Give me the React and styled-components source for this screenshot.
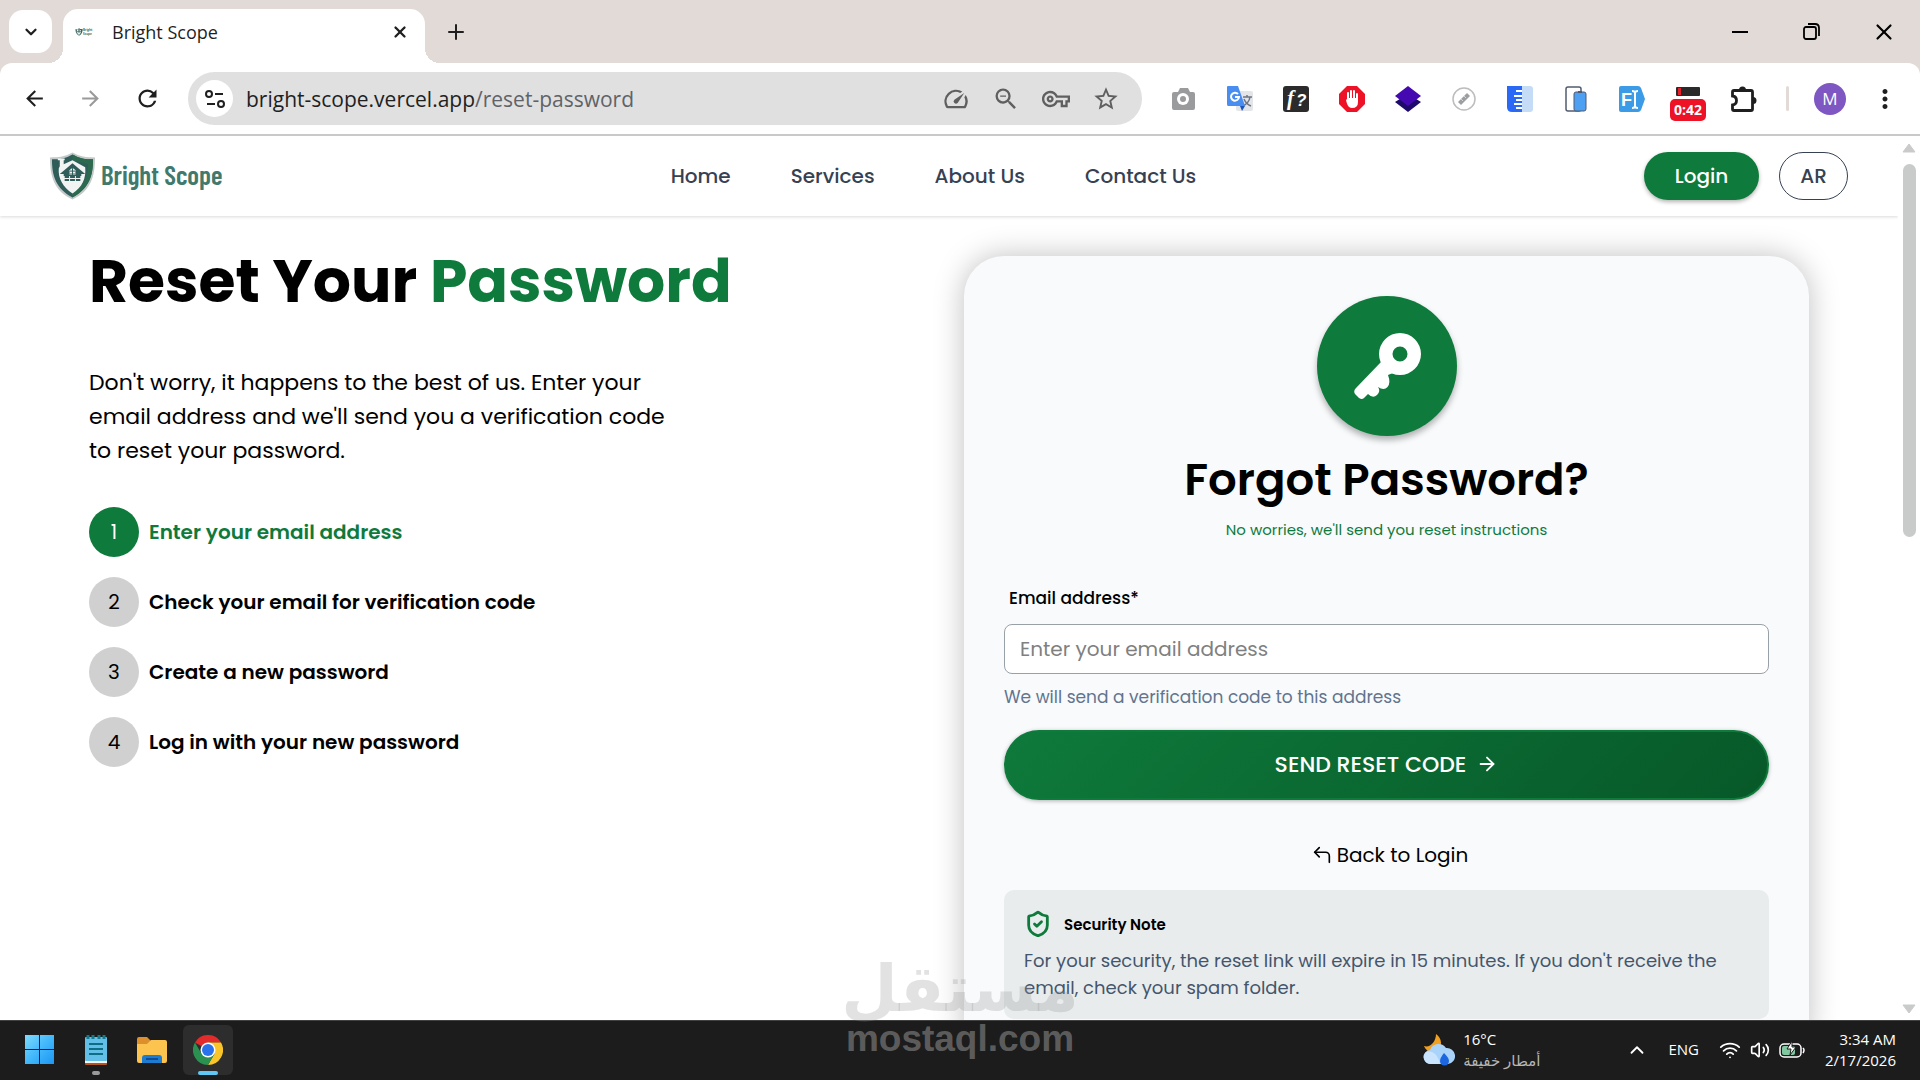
import { useState } from "react"
import styled, { createGlobalStyle, css } from "styled-components"
import {
  MdArrowBack,
  MdArrowForward,
  MdRefresh,
  MdZoomOut,
  MdOutlineVpnKey,
  MdStarBorder,
  MdMoreVert,
  MdOutlineSpeed,
} from "react-icons/md"
import { ArrowRight, ChevronDown, ChevronUp, CornerUpLeft, Plus, ShieldCheck, Volume2, Wifi, X } from "lucide-react"

const navLinks = ["Home", "Services", "About Us", "Contact Us"]

const steps = [
  "Enter your email address",
  "Check your email for verification code",
  "Create a new password",
  "Log in with your new password",
]

function Shield({ width, height }) {
  return (
    <svg width={width} height={height} viewBox="1 0 46 50" aria-hidden="true">
      <path d="M24 1C17 5 10 6 1 6c0 19 4 34 23 43C43 40 47 25 47 6 38 6 31 5 24 1z" fill="#c3c9c8" />
      <path d="M24 3C17 7 11 8 3 8c0 17 4 30 21 39C41 38 45 25 45 8 37 8 31 7 24 3z" fill="#2f5d5a" />
      <path d="M24 3c7 4 13 5 21 5 0 17-4 30-21 39v-5c12-7 16-17 16-29L24 9z" fill="#2b6a4f" />
      <path d="M24 9l13 7c1 12-3 20-13 27C14 36 9 27 10 17l1-2V9H9V7h7v2h-1v4z" fill="#f1f4f3" />
      <path d="M24 12L11 23h4v2h18v-2h4z" fill="#2f5d5a" />
      <path d="M21 24v-5q3-4 6 0v5z" fill="#f1f4f3" />
      <path d="M16 26h16M16 29h16" stroke="#2f5d5a" strokeWidth="2" />
      <path d="M21 20h6M21 23h6M24 17v8" stroke="#2f5d5a" />
      <path d="M21 25v6M27 25v6" stroke="#f1f4f3" />
    </svg>
  )
}

function KeyIcon() {
  return (
    <svg width="68" height="68" viewBox="0 0 68 68" fill="currentColor" aria-hidden="true">
      <path fillRule="evenodd" d="M47 1a21 21 0 1 0 0 42 21 21 0 1 0 0-42zm0 13.500a7.500 7.500 0 1 1 0 15 7.500 7.500 0 1 1 0-15z" />
      <path d="M28 30L3 56q-3 3-1 6l4 4q3 2 5 0l4-4q5 5 9 1t1-8q6 4 9.500 0t.5-12l5-2z" />
    </svg>
  )
}

function TuneIcon() {
  return (
    <svg width="22" height="22" viewBox="0 0 22 22" fill="none" stroke="#1f1f1f" strokeWidth="2" aria-hidden="true">
      <circle cx="5" cy="6" r="3" />
      <path d="M11 6h8M3 16h8" />
      <circle cx="17" cy="16" r="3" />
    </svg>
  )
}

function PuzzleIcon() {
  return (
    <svg width="26" height="26" viewBox="0 0 26 26">
      <path
        d="M3 4.500h17q1.500 0 1.500 1.500v17q0 1.500-1.500 1.500H3q-1.500 0-1.500-1.500v-4q4-.5 4-4.500t-4-4.500V6q0-1.500 1.500-1.500z"
        fill="none"
        stroke="#1f1f1f"
        strokeWidth="2.800"
      />
      <path d="M8 4a3.500 3.500 0 0 1 7 0zM22 11a3.500 3.500 0 0 1 0 7z" fill="#1f1f1f" />
    </svg>
  )
}

function CameraIcon() {
  return (
    <svg width="26" height="26" viewBox="0 0 26 26">
      <path d="M3 6h4l2-4h8l2 4h3q2 0 2 2v14q0 2-2 2H3q-2 0-2-2V8q0-2 2-2z" fill="#9a9b9d" />
      <circle cx="12" cy="13" r="6" fill="#fff" />
      <circle cx="12" cy="13" r="3" fill="#9a9b9d" />
    </svg>
  )
}

function TranslateIcon() {
  return (
    <svg width="28" height="28" viewBox="0 0 28 28">
      <rect x="10" y="6" width="17" height="20" rx="2" fill="#e3e5e8" />
      <path d="M17 12h9M21 10v2M24 12q-1 6-7 9M18 14q2 5 7 7" stroke="#6d7683" strokeWidth="1.500" fill="none" />
      <path d="M2 1h10l7 20H2q-1 0-1-2V2q0-1 1-1z" fill="#4a8df0" />
      <path d="M14 21h5l-3 5z" fill="#1b56c0" />
      <path d="M12 9a4 4 0 1 0 1 3H9" stroke="#fff" strokeWidth="2" fill="none" />
    </svg>
  )
}

function FontIcon() {
  return (
    <svg width="26" height="26" viewBox="0 0 26 26">
      <rect width="26" height="26" rx="3" fill="#2b2b2b" />
      <text x="4" y="19" fontFamily="Liberation Serif, serif" fontSize="21" fontWeight="700" fontStyle="italic" fill="#fff">f</text>
      <text x="13" y="20" fontFamily="Liberation Sans, sans-serif" fontSize="17" fontWeight="700" fontStyle="italic" fill="#fff">?</text>
    </svg>
  )
}

function HandIcon() {
  return (
    <svg width="26" height="26" viewBox="0 0 26 26">
      <path d="M8 0h10l8 8v10l-8 8H8l-8-8V8z" fill="#ee1226" />
      <path d="M9 15V7M12 14V5M15 14V5M18 15V8" stroke="#fff" strokeWidth="2" strokeLinecap="round" />
      <path d="M8 12h11v4q0 6-6 6c-4 0-5-4-6-8l1-1z" fill="#fff" />
    </svg>
  )
}

function LayersIcon() {
  return (
    <svg width="26" height="26" viewBox="0 0 26 26">
      <path d="M0 16l13-8 13 8-13 10z" fill="#1d0a6b" />
      <path d="M0 10L13 0l13 10-13 10z" fill="#4409b0" />
    </svg>
  )
}

function RulerRoundIcon() {
  return (
    <svg width="24" height="24" viewBox="0 0 24 24">
      <circle cx="12" cy="12" r="11" fill="#fff" stroke="#bdbdbd" strokeWidth="1.500" />
      <path d="M6 15l9-9 3 3-9 9z" fill="#9c9fa1" />
      <path d="M9 12l2 2M12 9l2 2" stroke="#d6d6d6" />
    </svg>
  )
}

function RulerIcon() {
  return (
    <svg width="26" height="26" viewBox="0 0 26 26">
      <path d="M15 0h8q3 0 3 3v20q0 3-3 3h-8z" fill="#c5dcf6" />
      <path d="M0 0h15v26H5q-5 0-5-5z" fill="#2a68f6" />
      <path d="M9 5h6M7 10h8M9 14h6M7 18h8M9 22h6" stroke="#fff" strokeWidth="2" />
    </svg>
  )
}

function DevicesIcon() {
  return (
    <svg width="22" height="26" viewBox="0 0 22 26">
      <rect x="1" y="1" width="15" height="24" rx="2" fill="#fff" stroke="#515b70" strokeWidth="1.500" />
      <rect x="9" y="6" width="12" height="19" rx="2" fill="#4da0f2" stroke="#515b70" />
      <path d="M13 6h4" stroke="#515b70" strokeWidth="2" />
    </svg>
  )
}

function FieldIcon() {
  return (
    <svg width="26" height="26" viewBox="0 0 26 26">
      <path d="M2 0h17q2 0 3 2l4 11-4 11q-1 2-3 2H2q-2 0-2-2V2q0-2 2-2z" fill="#3c9be6" />
      <text x="2" y="20" fontFamily="Liberation Sans, sans-serif" fontSize="18" fontWeight="700" fill="#fff">F</text>
      <path d="M13 5q3 0 3 2 0-2 3-2M13 22q3 0 3-2 0 2 3 2M16 6v15" stroke="#fff" strokeWidth="2" fill="none" />
    </svg>
  )
}

function StripIcon() {
  return (
    <svg width="24" height="9" viewBox="0 0 24 9">
      <rect width="24" height="9" rx="1" fill="#2a2a2a" />
      <rect x="2" y="1" width="3" height="7" fill="#e3202c" />
    </svg>
  )
}

const extensions = [
  { name: "Screenshot", Icon: CameraIcon },
  { name: "Translate", Icon: TranslateIcon },
  { name: "Font finder", Icon: FontIcon },
  { name: "Ad blocker", Icon: HandIcon },
  { name: "Layers", Icon: LayersIcon },
  { name: "Measure", Icon: RulerRoundIcon },
  { name: "Page ruler", Icon: RulerIcon },
  { name: "Responsive viewer", Icon: DevicesIcon },
  { name: "Form filler", Icon: FieldIcon },
  { name: "Recorder", Icon: StripIcon, badge: "0:42" },
  { name: "Extensions", Icon: PuzzleIcon },
]

function WindowsIcon() {
  return (
    <svg width="30" height="30" viewBox="0 0 30 30">
      <defs>
        <linearGradient id="win" x1="0" y1="0" x2="1" y2="1">
          <stop offset="0" stopColor="#7fdcfc" />
          <stop offset="0.5" stopColor="#43b8fb" />
          <stop offset="1" stopColor="#1c97f3" />
        </linearGradient>
      </defs>
      <path d="M0 0h14v14H0zM15 0h14v14H15zM0 15h14v14H0zM15 15h14v14H15z" fill="url(#win)" />
    </svg>
  )
}

function NotepadIcon() {
  return (
    <svg width="24" height="32" viewBox="0 0 24 32">
      <rect x="1" y="27" width="22" height="4" rx="1" fill="#b5561c" />
      <rect x="1" y="25" width="22" height="4" fill="#f4f4f4" />
      <rect x="1" y="3" width="22" height="24" rx="1" fill="#62c0e8" />
      <path d="M5 10h14M5 15h14M5 20h14" stroke="#0f6e86" strokeWidth="2" />
      <path d="M4 1v4M9 1v4M15 1v4M20 1v4" stroke="#14798f" strokeWidth="3" />
    </svg>
  )
}

function FolderIcon() {
  return (
    <svg width="32" height="28" viewBox="0 0 32 28">
      <path d="M1 3q0-2 2-2h8l4 4h14v6H1z" fill="#dc8f2b" />
      <path d="M1 8h10l4-4h14q2 0 2 2v19q0 2-2 2H3q-2 0-2-2z" fill="#fcc34f" />
      <path d="M6 27v-5q0-3 3-3h14q3 0 3 3v5z" fill="#1d7bd2" />
      <path d="M10 23h12" stroke="#0c4d96" strokeWidth="2" />
    </svg>
  )
}

function ChromeIcon() {
  return (
    <svg width="30" height="30" viewBox="0 0 30 30">
      <path d="M15 15L2 7.500A15 15 0 0 1 28 7.500H15z" fill="#e32b2b" />
      <path d="M15 7.500h13A15 15 0 0 1 15 30l6.500-11.200z" fill="#f9c529" />
      <path d="M8.500 18.800L2 7.500A15 15 0 0 0 15 30l6.500-11.200z" fill="#2b9150" />
      <circle cx="15" cy="15" r="7.500" fill="#fff" />
      <circle cx="15" cy="15" r="6" fill="#2a72ea" />
    </svg>
  )
}

function WeatherIcon() {
  return (
    <svg width="32" height="32" viewBox="0 0 32 32">
      <path d="M13 0c6 4 7 13 1 17C8 20 3 17 1 12c6 2 12-4 12-12z" fill="#f2a01f" />
      <path d="M8 30a7 7 0 0 1-1-14 9 9 0 0 1 16-2 8 8 0 0 1 2 16z" fill="#a9d3f8" />
      <path d="M8 30a7 7 0 0 1-5-12c6-2 12 2 14 12z" fill="#c9e4fc" />
      <path d="M21 19q5 5 5 8a4 4 0 0 1-9 0q0-3 4-8z" fill="#1c66df" />
    </svg>
  )
}

function BatteryIcon() {
  return (
    <svg width="26" height="18" viewBox="0 0 26 18" fill="none">
      <rect x="1" y="3" width="21" height="13" rx="4" stroke="#fff" strokeWidth="1.500" />
      <path d="M24 7q2 2 0 5" stroke="#fff" strokeWidth="1.500" />
      <rect x="3" y="5" width="13" height="9" rx="2" fill="#7fc8a0" />
      <path d="M13 0L8 8h4l-1 6 6-8h-4z" fill="#fff" stroke="#1c1c1c" />
    </svg>
  )
}

function RestoreIcon() {
  return (
    <svg width="18" height="18" viewBox="0 0 18 18" fill="none" stroke="#000" strokeWidth="1.800">
      <rect x="1" y="4" width="12" height="12" rx="2" />
      <path d="M5 1h7q4 0 4 4v8" />
    </svg>
  )
}

export default function App() {
  const [email, setEmail] = useState("")

  function handleSubmit(e) {
    e.preventDefault()
  }

  return (
    <Screen>
      <GlobalStyle />

      <TabStrip>
        <TabSearch aria-label="Search tabs"><ChevronDown size={18} strokeWidth={3} /></TabSearch>
        <Tab>
          <Favicon><Shield width={8} height={8} /><span>Bright Scope</span></Favicon>
          <TabTitle>Bright Scope</TabTitle>
          <PlainButton aria-label="Close tab"><X size={18} strokeWidth={3} /></PlainButton>
        </Tab>
        <NewTab aria-label="New tab"><Plus size={24} strokeWidth={2} /></NewTab>
        <WindowButtons>
          <WindowButton aria-label="Minimize">
            <svg width="16" height="2"><rect width="16" height="2" fill="#000" /></svg>
          </WindowButton>
          <WindowButton aria-label="Restore"><RestoreIcon /></WindowButton>
          <WindowButton aria-label="Close"><X size={26} strokeWidth={2} /></WindowButton>
        </WindowButtons>
      </TabStrip>

      <ToolbarBack>
        <Toolbar>
          <NavButtons>
            <PlainButton aria-label="Back"><MdArrowBack size={25} /></PlainButton>
            <PlainButton aria-label="Forward" $muted><MdArrowForward size={25} /></PlainButton>
            <PlainButton aria-label="Reload"><MdRefresh size={27} /></PlainButton>
          </NavButtons>
          <AddressBar>
            <SiteInfo aria-label="Site information"><TuneIcon /></SiteInfo>
            <Url>bright-scope.vercel.app<span>/reset-password</span></Url>
            <AddressIcons>
              <MdOutlineSpeed size={28} />
              <MdZoomOut size={28} />
              <MdOutlineVpnKey size={28} />
              <MdStarBorder size={28} />
            </AddressIcons>
          </AddressBar>
          <Extensions>
            {extensions.map(({ name, Icon, badge }) => (
              <ExtensionButton key={name} aria-label={name} $top={!!badge}>
                <Icon />
                {badge && <Badge>{badge}</Badge>}
              </ExtensionButton>
            ))}
          </Extensions>
          <Divider />
          <Avatar aria-label="Profile">M</Avatar>
          <PlainButton aria-label="Menu"><MdMoreVert size={30} /></PlainButton>
        </Toolbar>
      </ToolbarBack>

      <Viewport>
        <Page>
          <Header>
            <Logo href="#"><Shield width={45} height={50} /><span>Bright Scope</span></Logo>
            <Nav>
              {navLinks.map((link) => <a key={link} href="#">{link}</a>)}
            </Nav>
            <Actions>
              <LoginButton>Login</LoginButton>
              <LangButton>AR</LangButton>
            </Actions>
          </Header>

          <Main>
            <Intro>
              <h1>Reset Your <span>Password</span></h1>
              <p>Don't worry, it happens to the best of us. Enter your email address and we'll send you a verification code to reset your password.</p>
              <Steps>
                {steps.map((step, i) => (
                  <Step key={step} $active={i === 0}>
                    <span>{i + 1}</span>
                    <strong>{step}</strong>
                  </Step>
                ))}
              </Steps>
            </Intro>

            <Card onSubmit={handleSubmit}>
              <KeyCircle><KeyIcon /></KeyCircle>
              <h2>Forgot Password?</h2>
              <Subtitle>No worries, we'll send you reset instructions</Subtitle>
              <label htmlFor="email">Email address*</label>
              <EmailInput
                id="email"
                type="email"
                placeholder="Enter your email address"
                value={email}
                onChange={(e) => setEmail(e.target.value)}
              />
              <Hint>We will send a verification code to this address</Hint>
              <SubmitButton type="submit">SEND RESET CODE <ArrowRight size={22} /></SubmitButton>
              <BackLink href="#"><CornerUpLeft size={22} strokeWidth={1.8} />Back to Login</BackLink>
              <Note>
                <NoteTitle><ShieldCheck size={28} strokeWidth={2.4} color="#0e7a3b" />Security Note</NoteTitle>
                <p>For your security, the reset link will expire in 15 minutes. If you don't receive the email, check your spam folder.</p>
              </Note>
            </Card>
          </Main>
        </Page>
        <Scrollbar>
          <ScrollArrow viewBox="0 0 14 10"><path d="M7 1l6 8H1z" /></ScrollArrow>
          <ScrollTrack><ScrollThumb /></ScrollTrack>
          <ScrollArrow viewBox="0 0 14 10"><path d="M7 9l6-8H1z" /></ScrollArrow>
        </Scrollbar>
      </Viewport>

      <Taskbar>
        <TaskButton aria-label="Start"><WindowsIcon /></TaskButton>
        <TaskButton aria-label="Notepad" $mark="idle"><NotepadIcon /></TaskButton>
        <TaskButton aria-label="File Explorer"><FolderIcon /></TaskButton>
        <TaskButton aria-label="Chrome" $mark="active"><ChromeIcon /></TaskButton>
        <Weather>
          <WeatherIcon />
          <div>
            <span>16°C</span>
            <small lang="ar" dir="rtl">أمطار خفيفة</small>
          </div>
        </Weather>
        <Tray>
          <ChevronUp size={22} />
          <span>ENG</span>
          <TrayStatus>
            <Wifi size={22} />
            <Volume2 size={20} />
            <BatteryIcon />
          </TrayStatus>
          <Clock>3:34 AM<br />2/17/2026</Clock>
        </Tray>
      </Taskbar>

      <Watermark>
        <b lang="ar">مستقل</b>
        <span>mostaql.com</span>
      </Watermark>
    </Screen>
  )
}

const GlobalStyle = createGlobalStyle`
  * {
    box-sizing: border-box;
  }
  body, h1, h2, p, ol {
    margin: 0;
    padding: 0;
  }
  body {
    font-family: "Poppins", "Inter", sans-serif;
    color: #000;
    overflow: hidden;
  }
  button {
    border: 0;
    padding: 0;
    background: none;
    font: inherit;
    color: inherit;
    cursor: pointer;
  }
  a {
    color: inherit;
    text-decoration: none;
  }
  svg {
    flex-shrink: 0;
  }
`
const systemFont = css`
  font-family: "Segoe UI", "Open Sans", "DejaVu Sans", sans-serif;
`
const Screen = styled.div`
  position: relative;
  display: flex;
  flex-direction: column;
  height: 100vh;
  overflow: hidden;
  background-color: #fff;
`
const TabStrip = styled.div`
  ${systemFont}
  display: flex;
  align-items: flex-end;
  height: 63px;
  flex-shrink: 0;
  padding-left: 9px;
  background-color: #e2dad7;
`
const PlainButton = styled.button`
  display: flex;
  align-items: center;
  justify-content: center;
  color: ${(props) => (props.$muted ? "#9a9a9a" : "#1f1f1f")};
`
const TabSearch = styled(PlainButton)`
  width: 43px;
  height: 43px;
  margin-bottom: 10px;
  border-radius: 14px;
  background-color: #fff;
`
const Tab = styled.div`
  position: relative;
  display: flex;
  align-items: center;
  width: 362px;
  height: 54px;
  margin-left: 11px;
  padding: 0 16px 8px 12px;
  border-radius: 15px 15px 0 0;
  background-color: #fff;

  &::before, &::after {
    content: "";
    position: absolute;
    bottom: 0;
    width: 15px;
    height: 15px;
  }
  &::before {
    right: 100%;
    background: radial-gradient(circle at 0 0, transparent 15px, #fff 15px);
  }
  &::after {
    left: 100%;
    background: radial-gradient(circle at 100% 0, transparent 15px, #fff 15px);
  }
`
const Favicon = styled.span`
  display: flex;
  align-items: center;
  width: 26px;
  font-size: 3px;
  font-weight: 700;
  color: #3c7365;
`
const TabTitle = styled.span`
  flex: 1;
  margin-left: 11px;
  font-size: 18px;
  color: #1f1f1f;
`
const NewTab = styled(PlainButton)`
  width: 43px;
  height: 43px;
  margin: 0 0 10px 9px;
`
const WindowButtons = styled.div`
  display: flex;
  align-self: stretch;
  margin-left: auto;
`
const WindowButton = styled(PlainButton)`
  width: 72px;
  color: #000;
`
const ToolbarBack = styled.div`
  flex-shrink: 0;
  background-color: #e2dad7;
`
const Toolbar = styled.div`
  ${systemFont}
  display: flex;
  align-items: center;
  height: 73px;
  padding: 0 20px 0 22px;
  border-bottom: 2px solid #c9c9c9;
  border-radius: 12px 12px 0 0;
  background-color: #fff;
`
const NavButtons = styled.div`
  display: flex;
  gap: 31px;
  width: 166px;
`
const AddressBar = styled.div`
  display: flex;
  align-items: center;
  flex: 1;
  height: 53px;
  padding: 0 22px 0 8px;
  border-radius: 27px;
  background-color: #e0e0e0;
`
const SiteInfo = styled(PlainButton)`
  width: 37px;
  height: 37px;
  border-radius: 50%;
  background-color: #fff;
`
const Url = styled.div`
  flex: 1;
  margin-left: 13px;
  font-size: 21px;
  color: #1f1f1f;
  span {
    color: #5f6368;
  }
`
const AddressIcons = styled.div`
  display: flex;
  gap: 22px;
  color: #5f5f5f;
`
const Extensions = styled.div`
  display: flex;
  margin-left: 14px;
`
const ExtensionButton = styled(PlainButton)`
  position: relative;
  width: 56px;
  height: 40px;
  ${(props) => props.$top && css`
    align-items: flex-start;
    padding-top: 8px;
  `}
`
const Badge = styled.span`
  position: absolute;
  top: 20px;
  left: 10px;
  width: 36px;
  border-radius: 5px;
  background-color: #ee1226;
  color: #fff;
  font-size: 14px;
  font-weight: 700;
  line-height: 22px;
`
const Divider = styled.span`
  width: 3px;
  height: 25px;
  margin: 0 25px 0 14px;
  border-radius: 2px;
  background-color: #e2dad7;
`
const Avatar = styled.button`
  width: 32px;
  height: 32px;
  margin-right: 24px;
  border-radius: 50%;
  background-color: #7e57c2;
  color: #fff;
  font-size: 17px;
  line-height: 32px;
`
const Viewport = styled.div`
  display: flex;
  flex: 1;
  min-height: 0;
  overflow: hidden;
`
const Page = styled.div`
  flex: 1;
  min-width: 0;
  overflow: hidden;
`
const Header = styled.header`
  display: flex;
  align-items: center;
  justify-content: space-between;
  height: 80px;
  padding: 0 50px;
  box-shadow: 0 1px 3px rgba(0, 0, 0, 0.15);
  font-size: 20px;
  font-weight: 500;
  color: #364153;
`
const Logo = styled.a`
  display: flex;
  align-items: center;
  gap: 6px;
  width: 173px;
  font-family: "Barlow Condensed", "Roboto Condensed", "Roboto", sans-serif;
  font-size: 27px;
  font-weight: 600;
  line-height: 30px;
  color: #41796c;
  white-space: nowrap;
  span {
    padding-bottom: 4px;
  }
`
const Nav = styled.nav`
  display: flex;
  gap: 60px;
`
const Actions = styled.div`
  display: flex;
  gap: 20px;
`
const LoginButton = styled.button`
  width: 115px;
  height: 48px;
  border-radius: 24px;
  background-color: #0e7a3b;
  box-shadow: 0 2px 4px rgba(0, 0, 0, 0.3);
  color: #fff;
`
const LangButton = styled.button`
  width: 69px;
  height: 48px;
  border: 1px solid #364153;
  border-radius: 24px;
`
const Main = styled.main`
  display: grid;
  grid-template-columns: 1fr 1fr;
  gap: 30px;
  padding: 20px 89px;
`
const Intro = styled.section`
  h1 {
    font-size: 60px;
    font-weight: 700;
    line-height: 90px;
    span {
      color: #0e7a3b;
    }
  }
  p {
    max-width: 600px;
    margin: 40px 0 39px;
    font-size: 22px;
    line-height: 34px;
  }
`
const Steps = styled.ol`
  display: flex;
  flex-direction: column;
  gap: 20px;
  list-style: none;
`
const Step = styled.li`
  display: flex;
  align-items: center;
  gap: 10px;
  font-size: 20px;
  color: ${(props) => (props.$active ? "#0e7a3b" : "#000")};
  span {
    width: 50px;
    border-radius: 50%;
    line-height: 50px;
    text-align: center;
    background-color: ${(props) => (props.$active ? "#0e7a3b" : "#d0d0d0")};
    color: ${(props) => (props.$active ? "#fff" : "#000")};
  }
  strong {
    font-weight: 600;
  }
`
const Card = styled.form`
  display: flex;
  flex-direction: column;
  margin-top: 20px;
  padding: 40px;
  border-radius: 40px;
  background-color: #f8fafc;
  box-shadow: 0 0 30px rgba(0, 0, 0, 0.25);
  h2 {
    margin-top: 8px;
    text-align: center;
    font-size: 45px;
    font-weight: 600;
    line-height: 72px;
  }
  label {
    margin: 44px 0 14px 5px;
    font-size: 17px;
    font-weight: 500;
    line-height: 24px;
  }
`
const KeyCircle = styled.div`
  display: flex;
  align-items: center;
  justify-content: center;
  align-self: center;
  width: 140px;
  height: 140px;
  border-radius: 50%;
  background-color: #0e7a3b;
  box-shadow: 0 4px 6px rgba(0, 0, 0, 0.3);
  color: #fff;
`
const Subtitle = styled.p`
  margin-top: 2px;
  text-align: center;
  font-size: 15px;
  line-height: 24px;
  color: #0e7a3b;
`
const EmailInput = styled.input`
  height: 50px;
  padding: 0 15px;
  border: 1px solid #99a1a8;
  border-radius: 8px;
  background-color: #fff;
  font: inherit;
  font-size: 20px;
  &::placeholder {
    color: #808080;
  }
`
const Hint = styled.p`
  margin: 11px 0 21px;
  font-size: 17px;
  line-height: 24px;
  color: #62748e;
`
const SubmitButton = styled.button`
  display: flex;
  align-items: center;
  justify-content: center;
  gap: 10px;
  height: 70px;
  padding-bottom: 2px;
  border: 2px solid #0e7a3b;
  border-radius: 35px;
  background: linear-gradient(135deg, #0e7a3b, #075828) border-box;
  box-shadow: 0 1px 4px rgba(0, 0, 0, 0.3);
  color: #fff;
  font-size: 22px;
  font-weight: 500;
`
const BackLink = styled.a`
  display: flex;
  align-items: center;
  justify-content: center;
  gap: 4px;
  margin: 40px 0 20px;
  padding-left: 6px;
  font-size: 20px;
  line-height: 30px;
`
const Note = styled.div`
  padding: 20px 20px 18px;
  border-radius: 10px;
  background-color: #e8ecec;
  p {
    margin-top: 9px;
    font-size: 18px;
    line-height: 27px;
    color: #45556c;
  }
`
const NoteTitle = styled.div`
  display: flex;
  align-items: center;
  gap: 12px;
  height: 28px;
  font-size: 15px;
  font-weight: 600;
`
const Scrollbar = styled.div`
  display: flex;
  flex-direction: column;
  align-items: center;
  width: 22px;
  padding: 7px 0 6px;
`
const ScrollArrow = styled.svg`
  width: 14px;
  height: 10px;
  fill: #c9cbca;
  stroke: #c9cbca;
  stroke-linejoin: round;
`
const ScrollTrack = styled.div`
  flex: 1;
  padding: 11px 0;
`
const ScrollThumb = styled.div`
  width: 13px;
  height: 45%;
  border-radius: 7px;
  background-color: #c9cbca;
`
const Taskbar = styled.footer`
  ${systemFont}
  display: flex;
  align-items: center;
  gap: 6px;
  height: 60px;
  flex-shrink: 0;
  padding: 0 24px 2px 15px;
  border-top: 1px solid #414141;
  background-color: #1c1c1c;
  color: #fff;
  font-size: 15px;
  line-height: 21px;
`
const TaskButton = styled.button`
  position: relative;
  display: flex;
  align-items: center;
  justify-content: center;
  width: 50px;
  height: 50px;
  border-radius: 6px;
  background-color: ${(props) => (props.$mark === "active" ? "#2d2d2d" : "transparent")};
  ${(props) => props.$mark && css`
    &::after {
      content: "";
      position: absolute;
      bottom: 0;
      width: ${props.$mark === "active" ? 20 : 8}px;
      height: 4px;
      border-radius: 2px;
      background-color: ${props.$mark === "active" ? "#60c8f5" : "#9a9a9a"};
    }
  `}
`
const Weather = styled.div`
  display: flex;
  align-items: center;
  gap: 8px;
  margin-left: auto;
  div {
    display: flex;
    flex-direction: column;
    align-items: flex-start;
  }
  small {
    font-size: 15px;
    color: #b5b5b5;
  }
`
const Tray = styled.div`
  display: flex;
  align-items: center;
  gap: 20px;
  margin-left: 80px;
`
const TrayStatus = styled.div`
  display: flex;
  align-items: center;
  gap: 9px;
`
const Clock = styled.time`
  text-align: right;
`
const Watermark = styled.div`
  position: absolute;
  left: 50%;
  bottom: 20px;
  transform: translateX(-50%);
  display: flex;
  flex-direction: column;
  align-items: center;
  pointer-events: none;
  b {
    font-family: "DejaVu Sans", sans-serif;
    font-size: 65px;
    line-height: 58px;
    color: rgba(150, 150, 150, 0.28);
  }
  span {
    font-family: "Liberation Sans", sans-serif;
    font-size: 37px;
    font-weight: 700;
    line-height: 42px;
    color: rgba(255, 255, 255, 0.3);
  }
`
